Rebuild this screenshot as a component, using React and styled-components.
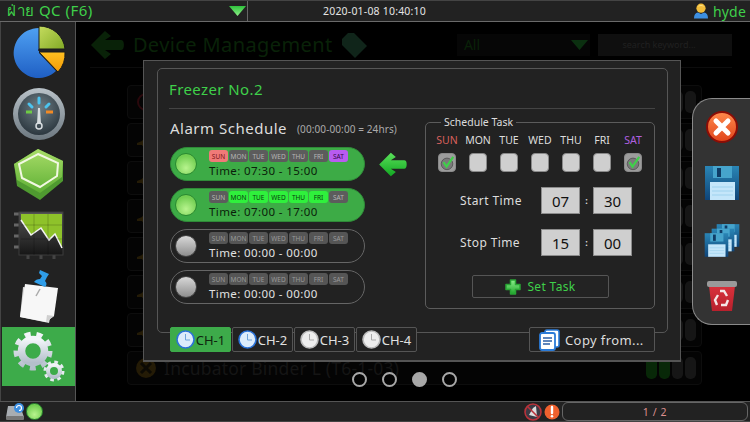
import React from "react";
import styled, { createGlobalStyle } from "styled-components";

const GlobalStyle = createGlobalStyle`
  html, body { margin: 0; padding: 0; background: #000; }
  body { font-family: "Noto Sans", "DejaVu Sans", sans-serif; }
  * { box-sizing: border-box; }
`;

const Screen = styled.div`
  width: 750px;
  height: 422px;
  display: flex;
  flex-direction: column;
  overflow: hidden;
  background: #000;
`;

/* top bar */
const TopBar = styled.div`
  height: 22px;
  flex: none;
  display: flex;
  background: #222;
  border-top: 1px solid #444;
  border-bottom: 1px solid #6a6a6a;
`;
const ModeBox = styled.div`
  width: 248px;
  display: flex;
  align-items: center;
  justify-content: space-between;
  padding: 0 1px 0 7px;
  border-right: 1px solid #666;
  color: #3fd04a;
  font-size: 15px;
  letter-spacing: 0.5px;
`;
const ClockBox = styled.div`
  flex: 1;
  display: flex;
  align-items: center;
  justify-content: space-between;
  padding-left: 75px;
  padding-right: 4px;
  color: #e4e4e4;
  font-size: 10.5px;
  letter-spacing: 0.2px;
`;
const UserName = styled.span`
  display: flex;
  align-items: center;
  gap: 4px;
  color: #3fd04a;
  font-size: 14px;
`;
const Middle = styled.div`
  flex: 1;
  display: flex;
  min-height: 0;
`;

/* left menu */
const Sidebar = styled.nav`
  width: 76px;
  flex: none;
  display: flex;
  flex-direction: column;
  background: #222;
  border-left: 1px solid #444;
  border-right: 1px solid #555;
  padding-left: 1px;
`;
const MenuItem = styled.div`
  height: ${(p) => (p.$active ? "59px" : "61px")};
  display: flex;
  align-items: center;
  justify-content: center;
  background: ${(p) => (p.$active ? "#3dab4a" : "transparent")};
`;

/* page behind the dialog */
const Main = styled.main`
  flex: 1;
  position: relative;
  background: #000;
  overflow: hidden;
`;
const PageHeader = styled.header`
  height: 46px;
  display: flex;
  align-items: center;
  margin: 0 18px 0 14px;
  border-bottom: 1px solid #0c0c0c;
`;
const PageTitle = styled.h1`
  width: 198px;
  flex: none;
  margin: 0 0 0 9px;
  color: #092208;
  font-size: 20px;
  font-weight: 400;
  letter-spacing: 0.4px;
  white-space: nowrap;
`;
const TagSlot = styled.div`
  display: flex;
  margin-left: 9px;
`;
const FilterBox = styled.div`
  width: 134px;
  height: 22px;
  margin-left: 89px;
  padding: 0 2px 0 7px;
  display: flex;
  align-items: center;
  justify-content: space-between;
  background: #060606;
  color: #092208;
  font-size: 14px;
`;
const SearchBox = styled.div`
  width: 134px;
  height: 22px;
  margin-left: 8px;
  padding-left: 24px;
  display: flex;
  align-items: center;
  background: #0f0f0f;
  color: #202020;
  font-size: 9px;
`;
const RowList = styled.div`
  display: flex;
  flex-direction: column;
  gap: 4px;
  margin: 17px 0 0 51px;
  width: 575px;
`;
const DeviceRow = styled.div`
  height: 34px;
  display: flex;
  align-items: center;
  justify-content: space-between;
  padding: 0 5px 0 8px;
  border: 1px solid #0d0d0d;
  border-radius: 4px;
  background: #040404;
  color: #151515;
  font-size: 17.5px;
  letter-spacing: 0.2px;
`;
const DeviceName = styled.span`
  display: flex;
  align-items: center;
  gap: 8px;
`;
const Levels = styled.div`
  display: flex;
  gap: 2px;
`;
const Level = styled.i`
  width: 11px;
  height: 22px;
  border-radius: 5px;
  background: ${(p) => (p.$on ? "#082808" : "#161616")};
`;
const Dots = styled.div`
  position: absolute;
  left: 276px;
  top: 350px;
  display: flex;
  gap: 15px;
`;
const Dot = styled.i`
  width: 15px;
  height: 15px;
  border-radius: 50%;
  border: 2px solid #a8a8a8;
  background: ${(p) => (p.$on ? "#a8a8a8" : "transparent")};
`;

/* dialog */
const Modal = styled.section`
  position: absolute;
  left: 67px;
  top: 38px;
  width: 538px;
  height: 302px;
  padding: 7px 12px 0 13px;
  background: #222;
  border: 1px solid #555;
  border-bottom-width: 2px;
`;
const ModalInner = styled.div`
  height: 265px;
  padding: 0 12px 0 11px;
  border: 1px solid #565656;
  border-radius: 5px;
`;
const ModalTitle = styled.h2`
  height: 40px;
  margin: 0;
  display: flex;
  align-items: center;
  color: #3fd04a;
  font-size: 15px;
  font-weight: 400;
  letter-spacing: 0.4px;
  border-bottom: 1px solid #444;
`;
const Columns = styled.div`
  display: flex;
  justify-content: space-between;
`;
const ScheduleColumn = styled.div`
  width: 239px;
  padding-left: 1px;
`;
const SectionTitle = styled.div`
  height: 38px;
  display: flex;
  align-items: center;
  gap: 10px;
  color: #ddd;
  font-size: 15px;
  letter-spacing: 0.5px;
  white-space: nowrap;
  small {
    color: #aaa;
    font-size: 10px;
    letter-spacing: 0.1px;
    padding-top: 2px;
  }
`;
const PillRow = styled.div`
  display: flex;
  align-items: center;
  gap: 13px;
  margin-bottom: 7px;
`;
const Pill = styled.div`
  width: 195px;
  height: 34px;
  flex: none;
  display: flex;
  align-items: center;
  gap: 12px;
  padding-left: 4px;
  border-radius: 17px;
  border: 1px solid ${(p) => (p.$on ? "#2f8a38" : "#666")};
  background: ${(p) => (p.$on ? "#3dab46" : "#222")};
  color: ${(p) => (p.$on ? "#0b1f0b" : "#e0e0e0")};
`;
const Lamp = styled.div`
  width: 22px;
  height: 22px;
  flex: none;
  border-radius: 50%;
  border: 1px solid ${(p) => (p.$on ? "#2a8a30" : "#444")};
  background: ${(p) =>
    p.$on
      ? "radial-gradient(circle at 50% 70%, #b8f48e, #73cf52 70%)"
      : "linear-gradient(#d8d8d8, #8e8e8e)"};
`;
const PillBody = styled.div`
  display: flex;
  flex-direction: column;
  padding-top: 1px;
`;
const Chips = styled.div`
  display: flex;
  gap: 1px;
`;
const Chip = styled.span`
  width: 19px;
  height: 12px;
  display: flex;
  align-items: center;
  justify-content: center;
  border-radius: 3px;
  font-size: 6.5px;
  background: ${(p) => p.$bg};
  color: ${(p) => p.$fg};
`;
const TimeText = styled.div`
  font-size: 11.5px;
  line-height: 17px;
  letter-spacing: 0.4px;
`;
const TaskBox = styled.fieldset`
  width: 230px;
  height: 194px;
  margin: 6px 0 0;
  padding: 0 12px;
  border: 1px solid #5c5c5c;
  border-radius: 5px;
  legend {
    margin-left: 3px;
    padding: 0 3px;
    color: #ddd;
    font-size: 10.5px;
  }
`;
const DayGrid = styled.div`
  display: grid;
  grid-template-columns: repeat(7, 18px);
  column-gap: 13px;
  justify-items: center;
  row-gap: 6px;
  margin-top: 5px;
`;
const DayLabel = styled.span`
  font-size: 10.5px;
  line-height: 13px;
  color: ${(p) => p.$color};
  white-space: nowrap;
`;
const Check = styled.div`
  width: 18px;
  height: 19px;
  border-radius: 4px;
  background: ${(p) => (p.$on ? "#9c9c9c" : "#cfcfcf")};
  border: 1px solid #8a8a8a;
  display: flex;
  align-items: center;
  justify-content: center;
`;
const TimeRow = styled.div`
  height: 27px;
  margin-top: 15px;
  display: flex;
  align-items: center;
  justify-content: flex-end;
  padding-right: 10px;
`;
const TimeLabel = styled.span`
  width: 81px;
  color: #ddd;
  font-size: 12px;
  letter-spacing: 0.4px;
`;
const TimeField = styled.div`
  width: 39px;
  height: 27px;
  display: flex;
  align-items: center;
  justify-content: center;
  background: #cfcfcf;
  border: 1px solid #8c8c8c;
  color: #111;
  font-size: 15px;
`;
const Colon = styled.span`
  width: 13px;
  text-align: center;
  color: #ddd;
  font-size: 9px;
  font-weight: 700;
`;
const SetButton = styled.button`
  width: 137px;
  height: 23px;
  margin: 19px 0 0 34px;
  display: flex;
  align-items: center;
  justify-content: center;
  gap: 6px;
  background: #232323;
  border: 1px solid #555;
  border-radius: 2px;
  color: #3fd04a;
  font: inherit;
  font-size: 12px;
  letter-spacing: 0.35px;
`;
const Footer = styled.div`
  display: flex;
  justify-content: space-between;
  margin: -6px 13px 0 13px;
`;
const Tabs = styled.div`
  display: flex;
  gap: 1px;
`;
const Tab = styled.div`
  width: 61px;
  height: 25px;
  display: flex;
  align-items: center;
  justify-content: center;
  gap: 1px;
  border: 1px solid ${(p) => (p.$active ? "#3dab4a" : "#555")};
  border-radius: 2px;
  background: ${(p) => (p.$active ? "#3dab4a" : "#222")};
  color: ${(p) => (p.$active ? "#0e260e" : "#e0e0e0")};
  font-size: 13px;
`;
const CopyButton = styled.div`
  width: 126px;
  height: 25px;
  display: flex;
  align-items: center;
  gap: 5px;
  padding-left: 8px;
  border: 1px solid #555;
  border-radius: 2px;
  background: #222;
  color: #ddd;
  font-size: 13px;
  letter-spacing: 0.4px;
`;

/* right tool panel */
const ToolPanel = styled.aside`
  position: absolute;
  left: 616px;
  top: 76px;
  width: 58px;
  height: 227px;
  padding-top: 12px;
  display: flex;
  flex-direction: column;
  align-items: center;
  gap: 22px;
  background: #333;
  border: 1px solid #8a8a8a;
  border-right: none;
  border-radius: 20px 0 0 20px;
`;

/* bottom bar */
const BottomBar = styled.footer`
  height: 21px;
  flex: none;
  display: flex;
  align-items: center;
  padding: 0 2px 0 5px;
  background: #222;
  border-top: 1px solid #555;
  border-bottom: 1px solid #444;
`;
const StatusLamp = styled.div`
  width: 17px;
  height: 17px;
  margin-left: 1px;
  border-radius: 50%;
  border: 1px solid #2a8a30;
  background: radial-gradient(circle at 50% 70%, #b8f48e, #73cf52 70%);
`;
const Alerts = styled.div`
  margin-left: auto;
  display: flex;
  align-items: center;
  gap: 2px;
`;
const Pager = styled.div`
  width: 186px;
  height: 19px;
  margin-left: 2px;
  display: flex;
  align-items: center;
  justify-content: center;
  border: 1px solid #666;
  border-radius: 6px;
  color: #dc8f8f;
  font-size: 10.5px;
  letter-spacing: 0.6px;
`;

/* drawings */
const Triangle = ({ id, top = "#3ed04a", bottom = "#3ed04a" }) => (
  <svg width="17" height="10" viewBox="0 0 17 10">
    <defs>
      <linearGradient id={id} x1="0" y1="0" x2="0" y2="1">
        <stop offset="0" stopColor={top} />
        <stop offset="1" stopColor={bottom} />
      </linearGradient>
    </defs>
    <path d="M0 0H17L8.5 10Z" fill={`url(#${id})`} />
  </svg>
);

const BackArrow = ({ w, h, color, light }) => (
  <svg width={w} height={h} viewBox="0 0 34 30">
    <defs>
      <linearGradient id={`arrow${w}`} x1="0" y1="0" x2="0" y2="1">
        <stop offset="0" stopColor={light || color} />
        <stop offset="1" stopColor={color} />
      </linearGradient>
    </defs>
    <path d="M15 1 L21 6 L15 10 H31 Q34 10 34 15 Q34 20 31 20 H15 L21 24 L15 29 L1 15 Z" fill={`url(#arrow${w})`} />
  </svg>
);

const UserIcon = () => (
  <svg width="16" height="16" viewBox="0 0 16 16">
    <path d="M1 15.5 Q1 10 5 9.5 L8 11 L11 9.5 Q15 10 15 15.5Z" fill="#3d8fe0" />
    <circle cx="8" cy="5.2" r="4.6" fill="#f1bd3c" />
    <path d="M4.5 3.5 Q8 0.5 11.5 3.5 Q8 2.5 4.5 3.5Z" fill="#ffe68a" />
  </svg>
);

const PieIcon = () => (
  <svg width="60" height="56" viewBox="0 0 60 56">
    <defs>
      <linearGradient id="pieBlue" x1="0" y1="0" x2="0" y2="1">
        <stop offset="0" stopColor="#4ea0f2" />
        <stop offset="1" stopColor="#1f5fc4" />
      </linearGradient>
      <linearGradient id="pieGreen" x1="0" y1="0" x2="1" y2="1">
        <stop offset="0" stopColor="#c5dc5e" />
        <stop offset="1" stopColor="#7fa823" />
      </linearGradient>
      <linearGradient id="pieOrange" x1="0" y1="0" x2="0" y2="1">
        <stop offset="0" stopColor="#ffc021" />
        <stop offset="1" stopColor="#f39a06" />
      </linearGradient>
    </defs>
    <path d="M30 28 V3 A25 25 0 1 0 47 46 Z" fill="url(#pieBlue)" />
    <path d="M30 26 V1 A26 25 0 0 1 56 24 H30Z" fill="url(#pieGreen)" stroke="#1b1b1b" strokeWidth="1" />
    <path d="M30 27 H56 A27 27 0 0 1 49 47 Z" fill="url(#pieOrange)" stroke="#1b1b1b" strokeWidth="1" />
  </svg>
);

const GaugeIcon = () => (
  <svg width="56" height="56" viewBox="0 0 56 56">
    <defs>
      <linearGradient id="gaugeRing" x1="0" y1="0" x2="0" y2="1">
        <stop offset="0" stopColor="#b9c2c8" />
        <stop offset="1" stopColor="#6d7880" />
      </linearGradient>
      <radialGradient id="gaugeFace" cx="0.5" cy="0.35" r="0.7">
        <stop offset="0" stopColor="#6f7f86" />
        <stop offset="1" stopColor="#27323a" />
      </radialGradient>
    </defs>
    <circle cx="28" cy="28" r="26" fill="url(#gaugeRing)" />
    <circle cx="28" cy="28" r="21" fill="url(#gaugeFace)" />
    <path d="M15 26 h6" stroke="#6ecb45" strokeWidth="3" />
    <path d="M35 26 h7" stroke="#f28a25" strokeWidth="3" />
    <path d="M18 18 l3 3 M28 12 v5 M38 18 l-3 3" stroke="#4cc4ee" strokeWidth="3" strokeLinecap="round" />
    <path d="M27 22 h2 l1 16 h-4Z" fill="#d8dde0" />
    <circle cx="28" cy="40" r="3" fill="none" stroke="#d8dde0" strokeWidth="1.5" />
  </svg>
);

const HexIcon = () => (
  <svg width="56" height="56" viewBox="0 0 56 56">
    <defs>
      <linearGradient id="hexFill" x1="0" y1="0" x2="0" y2="1">
        <stop offset="0" stopColor="#a8dc68" />
        <stop offset="1" stopColor="#5fb035" />
      </linearGradient>
    </defs>
    <path d="M27 2 L52 14 L52 34 L29 53 L6 39 L3 17 Z" fill="#4f9a30" />
    <path d="M27 2 L52 14 L51 30 L29 46 L6 33 L3 17 Z" fill="url(#hexFill)" />
    <path d="M27 7 L47 16 L46 29 L29 40 L11 31 L8 17 Z" fill="none" stroke="#f2f8e2" strokeWidth="2" />
  </svg>
);

const ChartIcon = () => (
  <svg width="52" height="50" viewBox="0 0 52 50">
    <defs>
      <linearGradient id="chartBack" x1="0" y1="0" x2="0" y2="1">
        <stop offset="0" stopColor="#555" />
        <stop offset="1" stopColor="#161616" />
      </linearGradient>
    </defs>
    <path d="M1 3 h6 M1 14 h6 M1 25 h6 M1 36 h6" stroke="#666" strokeWidth="3" />
    <path d="M15 44 v4 M28 44 v4 M41 44 v4" stroke="#444" strokeWidth="3" />
    <rect x="6" y="1" width="44" height="43" fill="url(#chartBack)" stroke="#3c3c3c" />
    <path d="M8 3 H49 V37 L42 23 L36 29 L28 17 L18 24 L8 9 Z" fill="#8ec22a" />
    <path d="M8 9 L18 24 L28 17 L36 29 L42 23 L49 37" fill="none" stroke="#f2f2f2" strokeWidth="1.5" />
    <path d="M21 3 V44 M35 3 V44 M8 14 H49 M8 28 H49" stroke="#000" strokeOpacity="0.2" />
  </svg>
);

const NoteIcon = () => (
  <svg width="46" height="56" viewBox="0 0 46 56">
    <path d="M7 18 L40 22 L33 54 L4 48Z" fill="#d8d8d8" />
    <path d="M9 15 L42 19 L38 47 L30 53 L4 48 Z" fill="#f7f7f7" />
    <path d="M30 53 L31 46 L38 47Z" fill="#cfcfcf" />
    <path d="M24 20 L20 27" stroke="#aaa" strokeWidth="1.5" />
    <path d="M24 1 L33 5 L31 8 L29 12 Q32 15 29 18 L18 13 Q20 10 24 10 L26 7 L23 4Z" fill="#2f9de8" />
  </svg>
);

const Gears = () => (
  <svg width="60" height="56" viewBox="0 0 60 56">
    <defs>
      <linearGradient id="gearMetal" x1="0" y1="0" x2="0" y2="1">
        <stop offset="0" stopColor="#f2f5f9" />
        <stop offset="1" stopColor="#b4bfcb" />
      </linearGradient>
    </defs>
    <circle cx="24" cy="22" r="17" fill="none" stroke="url(#gearMetal)" strokeWidth="5" strokeDasharray="6 5.87" />
    <circle cx="24" cy="22" r="11.5" fill="none" stroke="url(#gearMetal)" strokeWidth="7.5" />
    <circle cx="45" cy="42" r="9" fill="none" stroke="#e6ebf0" strokeWidth="3" strokeDasharray="3.6 3.47" />
    <circle cx="45" cy="42" r="6" fill="none" stroke="url(#gearMetal)" strokeWidth="4" />
  </svg>
);

const CheckMark = () => (
  <svg width="18" height="18" viewBox="0 0 18 18">
    <circle cx="9" cy="10" r="6.5" fill="#7a7a7a" stroke="#555" />
    <path d="M5 8 L8.5 13 L16 2" fill="none" stroke="#3fd04a" strokeWidth="2.4" />
  </svg>
);

const Plus = () => (
  <svg width="16" height="16" viewBox="0 0 16 16">
    <defs>
      <linearGradient id="plusFill" x1="0" y1="0" x2="0" y2="1">
        <stop offset="0" stopColor="#8cf08c" />
        <stop offset="1" stopColor="#1fa52a" />
      </linearGradient>
    </defs>
    <path d="M5.5 1 H10.5 V5.5 H15 V10.5 H10.5 V15 H5.5 V10.5 H1 V5.5 H5.5Z" fill="url(#plusFill)" stroke="#29a534" strokeLinejoin="round" strokeWidth="1.5" />
  </svg>
);

const ClockIcon = ({ blue }) => (
  <svg width="19" height="19" viewBox="0 0 19 19">
    <circle cx="9.5" cy="9.5" r="8.5" fill={blue ? "#dcecfb" : "#eee"} stroke={blue ? "#2a72d8" : "#bbb"} strokeWidth="1.6" />
    <path d="M9.5 4 V10 H14" fill="none" stroke={blue ? "#6fa4dc" : "#aaa"} strokeWidth="1" />
  </svg>
);

const CopyIcon = () => (
  <svg width="22" height="22" viewBox="0 0 22 22">
    <rect x="7" y="1" width="14" height="17" rx="2" fill="#fff" stroke="#2b7bd8" strokeWidth="1.6" />
    <rect x="2" y="4" width="15" height="17" rx="2" fill="#fff" stroke="#2b7bd8" strokeWidth="1.8" />
    <path d="M5 9 H14 M5 12 H14 M5 15 H12" stroke="#2b5fa8" strokeWidth="1.4" />
  </svg>
);

const CloseIcon = () => (
  <svg width="32" height="32" viewBox="0 0 32 32">
    <defs>
      <linearGradient id="closeFill" x1="0" y1="0" x2="0" y2="1">
        <stop offset="0" stopColor="#ff8a4c" />
        <stop offset="1" stopColor="#e0431a" />
      </linearGradient>
    </defs>
    <circle cx="16" cy="16" r="15" fill="url(#closeFill)" stroke="#8a0d06" strokeWidth="2" />
    <path d="M10 10 L22 22 M22 10 L10 22" stroke="#fff" strokeWidth="5" strokeLinecap="round" />
  </svg>
);

const Floppy = ({ id, x = 0, y = 0, w = 36, h = 36 }) => (
  <svg x={x} y={y} width={w} height={h} viewBox="0 0 36 36">
    <defs>
      <linearGradient id={id} x1="0" y1="0" x2="0" y2="1">
        <stop offset="0" stopColor="#2a86b6" />
        <stop offset="1" stopColor="#0f4478" />
      </linearGradient>
    </defs>
    <path d="M1 1 H35 V35 H1Z" fill={`url(#${id})`} />
    <rect x="9" y="1" width="19" height="12" fill="#46a4cc" />
    <rect x="13" y="3" width="4" height="9" fill="#0f3c66" />
    <rect x="6" y="17" width="25" height="18" fill="#c4e6fa" />
    <path d="M8 22 H29 M8 26 H29 M8 30 H29" stroke="#9ed2ee" />
  </svg>
);

const FloppyStack = () => (
  <svg width="36" height="35" viewBox="0 0 36 35">
    <Floppy id="stack3" x="12" y="0" w="24" h="25" />
    <Floppy id="stack2" x="7" y="4" w="24" h="26" />
    <Floppy id="stack1" x="0" y="9" w="25" h="26" />
  </svg>
);

const TrashIcon = () => (
  <svg width="30" height="32" viewBox="0 0 30 32">
    <defs>
      <linearGradient id="binFill" x1="0" y1="0" x2="0" y2="1">
        <stop offset="0" stopColor="#d8323c" />
        <stop offset="1" stopColor="#b8202c" />
      </linearGradient>
    </defs>
    <path d="M2 6 H28 L25 31 H5Z" fill="url(#binFill)" />
    <rect x="0" y="1" width="30" height="6" rx="2" fill="#9a9a9a" />
    <path d="M13 11 L17 11 L20 16 M21 20 L19 25 L14 25 M10 25 L8 20 L11 15" fill="none" stroke="#f4e6e6" strokeWidth="2.4" />
  </svg>
);

const DriveIcon = () => (
  <svg width="20" height="18" viewBox="0 0 20 18">
    <path d="M3 3 H15 L19 14 H1Z" fill="#a8adb2" />
    <rect x="1" y="13" width="18" height="4" rx="1" fill="#777" />
    <circle cx="14" cy="5" r="5" fill="#3d8fe0" />
    <path d="M11.5 5 A2.5 2.5 0 1 1 14 7.5" fill="none" stroke="#fff" strokeWidth="1.2" />
  </svg>
);

const MuteIcon = () => (
  <svg width="18" height="18" viewBox="0 0 18 18">
    <circle cx="9" cy="9" r="8" fill="#3a3a44" stroke="#b8323a" strokeWidth="1.6" />
    <path d="M5 12 L9 5 L12 3 L13 14Z" fill="#ddd" />
    <path d="M3.5 3.5 L14.5 14.5" stroke="#b8323a" strokeWidth="1.6" />
  </svg>
);

const WarnIcon = () => (
  <svg width="16" height="16" viewBox="0 0 16 16">
    <circle cx="8" cy="8" r="7.5" fill="#f0612e" />
    <path d="M8 3 V9" stroke="#fff" strokeWidth="2.4" strokeLinecap="round" />
    <circle cx="8" cy="12.3" r="1.3" fill="#fff" />
  </svg>
);

const TagIcon = () => (
  <svg width="28" height="28" viewBox="0 0 28 28">
    <path d="M2 8 L8 2 H14 L27 15 L15 27 L2 14Z" fill="#10251a" />
  </svg>
);

/* dimmed status symbols at the start of each row */
const RowBadge = ({ kind }) => (
  <svg width="20" height="20" viewBox="0 0 20 20">
    {kind === "alarm" && <circle cx="10" cy="10" r="8" fill="none" stroke="#2a080c" strokeWidth="2" />}
    {kind === "idle" && <path d="M1 13 L6 11 L10 5 H20 V18 H8 L6 15 L1 15Z" fill="#241b06" />}
    {kind === "fault" && (
      <>
        <circle cx="10" cy="10" r="10" fill="#241b06" />
        <path d="M5 5 L15 15 M15 5 L5 15" stroke="#0c0a04" strokeWidth="3" />
      </>
    )}
  </svg>
);

const days = ["SUN", "MON", "TUE", "WED", "THU", "FRI", "SAT"];

const schedules = [
  { on: true, time: "07:30 - 15:00", marked: [0, 6] },
  { on: true, time: "07:00 - 17:00", marked: [1, 2, 3, 4, 5] },
  { on: false, time: "00:00 - 00:00", marked: [] },
  { on: false, time: "00:00 - 00:00", marked: [] },
];

const chipColors = (on, index, marked) => {
  if (!on) return { bg: "#555", fg: "#999" };
  if (!marked.includes(index)) return { bg: "#5c5c5c", fg: "#b5b5b5" };
  if (index === 0) return { bg: "#f07a78", fg: "#7a1515" };
  if (index === 6) return { bg: "#b85bf0", fg: "#33084a" };
  return { bg: "#2ff03c", fg: "#07400c" };
};

const dayColor = (index) => {
  if (index === 0) return "#d8605c";
  if (index === 6) return "#b060e0";
  return "#ddd";
};

const rows = [
  { kind: "alarm", name: "", levels: [0, 0] },
  { kind: "idle", name: "", levels: [0, 0] },
  { kind: "idle", name: "", levels: [0, 0] },
  { kind: "idle", name: "", levels: [0, 0] },
  { kind: "idle", name: "", levels: [0, 0] },
  { kind: "idle", name: "", levels: [0, 0] },
  { kind: "idle", name: "", levels: [0, 0] },
  { kind: "fault", name: "Incubator Binder L (T6-1-03)", levels: [1, 1, 0, 0] },
];

const App = () => (
  <Screen>
    <GlobalStyle />
    <TopBar>
      <ModeBox>
        <span>ฝ่าย QC (F6)</span>
        <Triangle id="modeArrow" top="#2fc23c" bottom="#8ff08a" />
      </ModeBox>
      <ClockBox>
        <span>2020-01-08 10:40:10</span>
        <UserName>
          <UserIcon />
          hyde
        </UserName>
      </ClockBox>
    </TopBar>
    <Middle>
      <Sidebar>
        <MenuItem><PieIcon /></MenuItem>
        <MenuItem><GaugeIcon /></MenuItem>
        <MenuItem><HexIcon /></MenuItem>
        <MenuItem><ChartIcon /></MenuItem>
        <MenuItem><NoteIcon /></MenuItem>
        <MenuItem $active><Gears /></MenuItem>
      </Sidebar>
      <Main>
        <PageHeader>
          <BackArrow w={34} h={30} color="#092208" />
          <PageTitle>Device Management</PageTitle>
          <TagSlot><TagIcon /></TagSlot>
          <FilterBox>
            All
            <Triangle id="filterArrow" top="#0b3010" bottom="#0b3010" />
          </FilterBox>
          <SearchBox>search keyword...</SearchBox>
        </PageHeader>
        <RowList>
          {rows.map((row, i) => (
            <DeviceRow key={i}>
              <DeviceName>
                <RowBadge kind={row.kind} />
                {row.name}
              </DeviceName>
              <Levels>
                {[0, 1, 2, 3].map((n) => (
                  <Level key={n} $on={row.levels[n] === 1} />
                ))}
              </Levels>
            </DeviceRow>
          ))}
        </RowList>
        <Dots>
          <Dot />
          <Dot />
          <Dot $on />
          <Dot />
        </Dots>

        <Modal>
          <ModalInner>
            <ModalTitle>Freezer No.2</ModalTitle>
            <Columns>
              <ScheduleColumn>
                <SectionTitle>
                  Alarm Schedule
                  <small>(00:00-00:00 = 24hrs)</small>
                </SectionTitle>
                {schedules.map((item, i) => (
                  <PillRow key={i}>
                    <Pill $on={item.on}>
                      <Lamp $on={item.on} />
                      <PillBody>
                        <Chips>
                          {days.map((day, d) => {
                            const c = chipColors(item.on, d, item.marked);
                            return (
                              <Chip key={day} $bg={c.bg} $fg={c.fg}>{day}</Chip>
                            );
                          })}
                        </Chips>
                        <TimeText>Time: {item.time}</TimeText>
                      </PillBody>
                    </Pill>
                    {i === 0 && <BackArrow w={29} h={25} color="#12a822" light="#5ae05a" />}
                  </PillRow>
                ))}
              </ScheduleColumn>
              <TaskBox>
                <legend>Schedule Task</legend>
                <DayGrid>
                  {days.map((day, d) => (
                    <DayLabel key={day} $color={dayColor(d)}>{day}</DayLabel>
                  ))}
                  {days.map((day, d) => {
                    const on = d === 0 || d === 6;
                    return <Check key={day} $on={on}>{on && <CheckMark />}</Check>;
                  })}
                </DayGrid>
                <TimeRow>
                  <TimeLabel>Start Time</TimeLabel>
                  <TimeField>07</TimeField>
                  <Colon>:</Colon>
                  <TimeField>30</TimeField>
                </TimeRow>
                <TimeRow>
                  <TimeLabel>Stop Time</TimeLabel>
                  <TimeField>15</TimeField>
                  <Colon>:</Colon>
                  <TimeField>00</TimeField>
                </TimeRow>
                <SetButton>
                  <Plus />
                  Set Task
                </SetButton>
              </TaskBox>
            </Columns>
          </ModalInner>
          <Footer>
            <Tabs>
              {["CH-1", "CH-2", "CH-3", "CH-4"].map((name, i) => (
                <Tab key={name} $active={i === 0}>
                  <ClockIcon blue={i < 2} />
                  {name}
                </Tab>
              ))}
            </Tabs>
            <CopyButton>
              <CopyIcon />
              Copy from...
            </CopyButton>
          </Footer>
        </Modal>

        <ToolPanel>
          <CloseIcon />
          <Floppy id="saveOne" />
          <FloppyStack />
          <TrashIcon />
        </ToolPanel>
      </Main>
    </Middle>
    <BottomBar>
      <DriveIcon />
      <StatusLamp />
      <Alerts>
        <MuteIcon />
        <WarnIcon />
      </Alerts>
      <Pager>1 / 2</Pager>
    </BottomBar>
  </Screen>
);

export default App;
